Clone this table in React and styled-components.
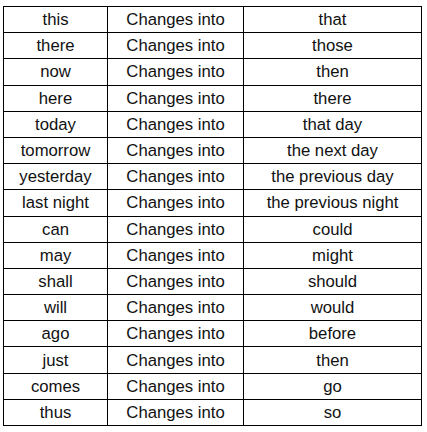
import React from "react";
import styled, { createGlobalStyle } from "styled-components";

const Global = createGlobalStyle`
  html, body { margin: 0; padding: 0; background: #fff; }
  body { font-family: "Liberation Sans", Arial, sans-serif; }
`;

const Page = styled.div`
  padding: 6px 0 0 3px;
`;

const Table = styled.table`
  border-collapse: collapse;
  table-layout: fixed;
  width: 419px;
  font-family: "Liberation Sans", Arial, sans-serif;
  font-size: 16.7px;
  color: #111;
`;

const Col = styled.col`
  width: ${(p) => p.$w}px;
`;

const Row = styled.tr`
  height: 26.2px;
`;

const Cell = styled.td`
  border: 1px solid #000;
  padding: 1px 0 0 0;
  text-align: center;
  vertical-align: middle;
  white-space: nowrap;
  line-height: 18px;
`;

const rows = [
  ["this", "that"],
  ["there", "those"],
  ["now", "then"],
  ["here", "there"],
  ["today", "that day"],
  ["tomorrow", "the next day"],
  ["yesterday", "the previous day"],
  ["last night", "the previous night"],
  ["can", "could"],
  ["may", "might"],
  ["shall", "should"],
  ["will", "would"],
  ["ago", "before"],
  ["just", "then"],
  ["comes", "go"],
  ["thus", "so"],
];

export default function App() {
  return (
    <>
      <Global />
      <Page>
        <Table>
          <colgroup>
            <Col $w={104} />
            <Col $w={136} />
            <Col $w={178} />
          </colgroup>
          <tbody>
            {rows.map(([a, b]) => (
              <Row key={a}>
                <Cell>{a}</Cell>
                <Cell>Changes into</Cell>
                <Cell>{b}</Cell>
              </Row>
            ))}
          </tbody>
        </Table>
      </Page>
    </>
  );
}
